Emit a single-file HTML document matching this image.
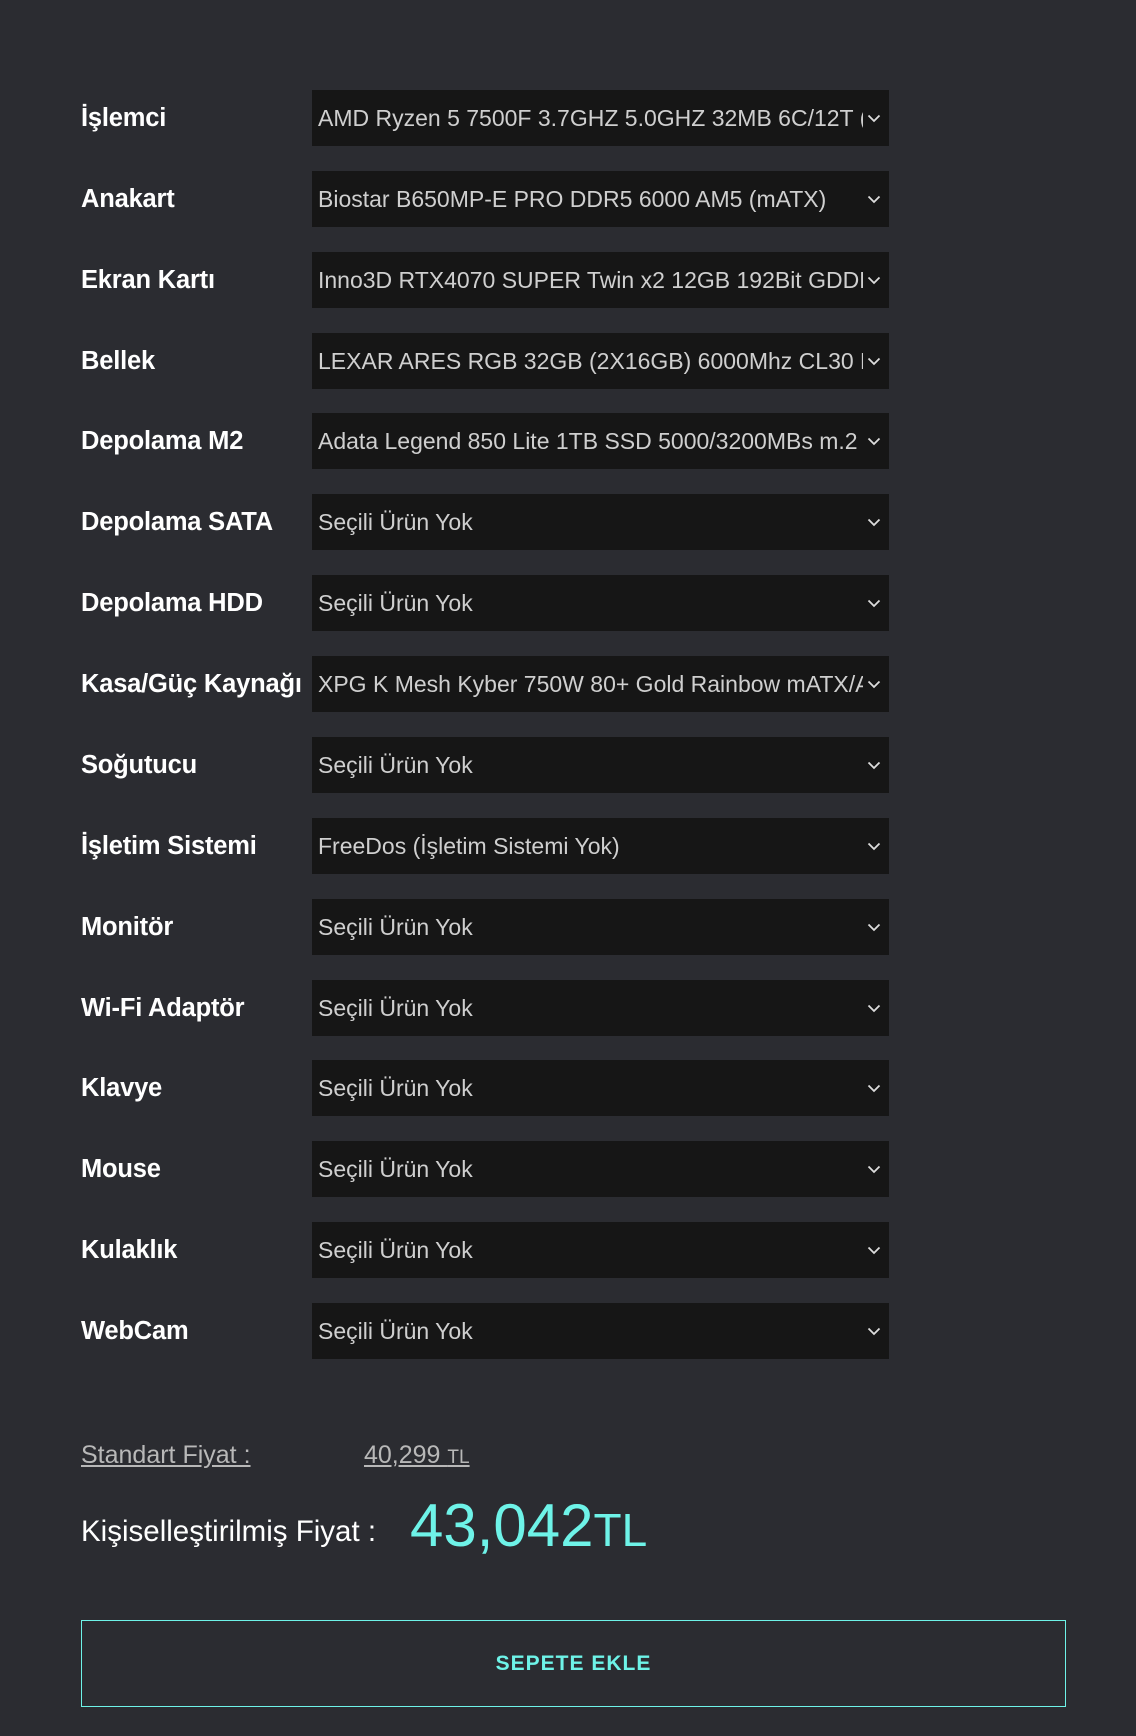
<!DOCTYPE html>
<html><head><meta charset="utf-8"><style>
html,body{margin:0;padding:0;background:#2b2c31;width:1136px;height:1736px;overflow:hidden;font-family:"Liberation Sans",sans-serif;}
.row{position:absolute;left:81px;height:56px;width:808px;}
.lab{position:absolute;left:0;top:0;line-height:56px;font-size:25.5px;font-weight:bold;color:#fff;white-space:nowrap;letter-spacing:-0.2px}
.sel{position:absolute;left:231px;top:0;width:577px;height:56px;background:#161616;}
.sel span{position:absolute;left:6px;top:0;line-height:56px;font-size:23px;color:#cfcfcf;white-space:nowrap;width:545px;overflow:hidden;}
.sel svg{position:absolute;left:555px;top:24px;}
</style></head><body>
<div id="rows"></div>
<div style="position:absolute;left:81px;top:1441px;font-size:25px;color:#b8b8b8;text-decoration:underline;">Standart Fiyat :</div>
<div style="position:absolute;left:364px;top:1441px;font-size:25px;color:#b8b8b8;text-decoration:underline;">40,299 <span style="font-size:19px">TL</span></div>
<div style="position:absolute;left:81px;top:1515px;font-size:29.5px;color:#fff;">Kişiselleştirilmiş Fiyat :</div>
<div style="position:absolute;left:410px;top:1491px;font-size:60px;color:#6ef3e8;line-height:70px;">43,042<span style="font-size:46px">TL</span></div>
<div style="position:absolute;left:81px;top:1620px;width:985px;height:87px;border:1px solid #6ef3e8;box-sizing:border-box;text-align:center;line-height:85px;font-size:21px;font-weight:bold;color:#6ef3e8;letter-spacing:1px;">SEPETE EKLE</div>
<script>
var d=[["İşlemci","AMD Ryzen 5 7500F 3.7GHZ 5.0GHZ 32MB 6C/12T (AM5)"],["Anakart","Biostar B650MP-E PRO DDR5 6000 AM5 (mATX)"],["Ekran Kartı","Inno3D RTX4070 SUPER Twin x2 12GB 192Bit GDDR6X"],["Bellek","LEXAR ARES RGB 32GB (2X16GB) 6000Mhz CL30 DDR5"],["Depolama M2","Adata Legend 850 Lite 1TB SSD 5000/3200MBs m.2"],["Depolama SATA","Seçili Ürün Yok"],["Depolama HDD","Seçili Ürün Yok"],["Kasa/Güç Kaynağı","XPG K Mesh Kyber 750W 80+ Gold Rainbow mATX/ATX"],["Soğutucu","Seçili Ürün Yok"],["İşletim Sistemi","FreeDos (İşletim Sistemi Yok)"],["Monitör","Seçili Ürün Yok"],["Wi-Fi Adaptör","Seçili Ürün Yok"],["Klavye","Seçili Ürün Yok"],["Mouse","Seçili Ürün Yok"],["Kulaklık","Seçili Ürün Yok"],["WebCam","Seçili Ürün Yok"]];
var h="";for(var i=0;i<d.length;i++){h+='<div class="row" style="top:'+Math.round(90+i*80.87)+'px"><div class="lab">'+d[i][0]+'</div><div class="sel"><span>'+d[i][1]+'</span><svg width="14" height="9" viewBox="0 0 14 9"><path d="M1.5 1.5L7 7L12.5 1.5" fill="none" stroke="#ddd" stroke-width="1.8"/></svg></div></div>';}
document.getElementById("rows").innerHTML=h;
</script>
</body></html>
